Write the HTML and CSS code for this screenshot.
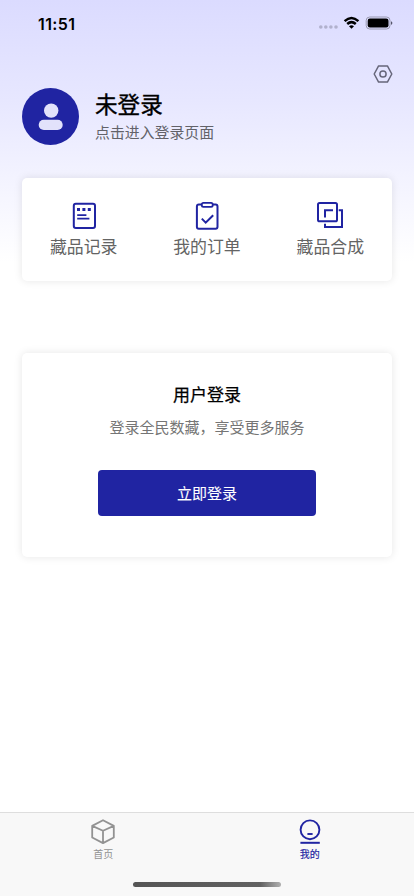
FILE: index.html
```html
<!DOCTYPE html>
<html lang="zh-CN">
<head>
<meta charset="utf-8">
<meta name="viewport" content="width=device-width, initial-scale=1">
<title>我的</title>
<link rel="stylesheet" href="styles.css">
</head>
<body>
<div class="app">
  <header class="status">
    <span class="time">11:51</span>
    <svg class="indicators" width="75" height="16" viewBox="0 0 75 16">
      <g fill="#b1b1cd"><circle cx="2.8" cy="12" r="1.8"/><circle cx="7.8" cy="12" r="1.8"/><circle cx="12.9" cy="12" r="1.8"/><circle cx="18" cy="12" r="1.8"/></g>
      <g fill="none" stroke="#000" stroke-width="2.5"><path d="M26.6 6.1Q33.5-.2 40.4 6.1"/><path d="M29.2 9Q33.5 5.2 37.8 9"/></g>
      <path d="M31 11.3Q33.5 9.2 36 11.3L33.5 13.8Z"/>
      <rect x="48.2" y="2" width="23.8" height="12" rx="3.5" fill="none" stroke="#9999b0"/>
      <rect x="49.7" y="3.5" width="20.8" height="9" rx="2.2"/>
      <path d="M73 6.2Q74.4 6.7 74.4 8T73 9.9Z" fill="#55556a"/>
    </svg>
  </header>
  <div class="settings">
    <svg width="20" height="20" viewBox="0 0 20 20" fill="none" stroke="#66667a" stroke-width="1.5" stroke-linejoin="round"><path d="M5.6 1.9H14.4L18.8 10L14.4 18.1H5.6L1.2 10Z"/><circle cx="10" cy="10" r="3.1"/></svg>
  </div>
  <section class="profile">
    <svg width="57" height="57" viewBox="0 0 57 57"><circle cx="28.5" cy="28.5" r="28.5" fill="#2024a2"/><g fill="#e2e2fb"><circle cx="29.2" cy="22.6" r="7.2"/><rect x="16.7" y="31.7" width="24" height="10.3" rx="5.1"/></g></svg>
    <div class="who"><h1>未登录</h1><p>点击进入登录页面</p></div>
  </section>
  <nav class="card menu">
    <a class="entry">
      <svg width="30" height="30" viewBox="0 0 30 30" fill="none" stroke="#2024a2" stroke-width="2"><rect x="4.8" y="3.7" width="21.2" height="24.3" rx="2"/><path d="M8.2 15.2H17.4M8.2 18.6H20.4" stroke-width="1.8"/><path d="M8 9.6H11M13.4 9.6H16.4M18.8 9.6H21.8" stroke-width="3"/></svg>
      <span>藏品记录</span>
    </a>
    <a class="entry">
      <svg width="30" height="30" viewBox="0 0 30 30" fill="none" stroke="#2024a2" stroke-width="2"><path d="M9.8 4.5H6.8Q4.9 4.5 4.9 6.4V26.8Q4.9 28.8 6.8 28.8H23.6Q25.5 28.8 25.5 26.8V6.4Q25.5 4.5 23.6 4.5H20.6"/><rect x="9.8" y="2.8" width="10.9" height="4" rx="1.6" stroke-width="1.8"/><path d="M9.8 18.6L13.7 22.6L21.2 15.2"/></svg>
      <span>我的订单</span>
    </a>
    <a class="entry">
      <svg width="30" height="30" viewBox="0 0 30 30" fill="none" stroke="#2024a2" stroke-width="2"><rect x="3" y="2.9" width="19" height="18.4" rx="1.6"/><path d="M10 17.5V10.2H18M23.7 10.2H27V27H10V23.7"/></svg>
      <span>藏品合成</span>
    </a>
  </nav>
  <section class="card login">
    <h2>用户登录</h2>
    <p>登录全民数藏，享受更多服务</p>
    <button>立即登录</button>
  </section>
  <footer class="tabs">
    <a class="tab">
      <svg width="28" height="28" viewBox="0 0 28 28" fill="none" stroke="#929292" stroke-width="1.8" stroke-linejoin="round"><path d="M14 2.2L24.8 7.9V19.5L14 25.1L3.2 19.5V7.9ZM3.2 7.9L14 12.8L24.8 7.9M14 12.8V25.1"/></svg>
      <span>首页</span>
    </a>
    <a class="tab active">
      <svg width="28" height="28" viewBox="0 0 28 28" fill="none" stroke="#2024a2" stroke-width="1.9"><circle cx="14" cy="11.8" r="9.4"/><path d="M11.4 16H16.6"/><path d="M4.4 24.8H23.8" stroke-width="2"/></svg>
      <span>我的</span>
    </a>
  </footer>
  <div class="home-bar"></div>
</div>
</body>
</html>
```
FILE: styles.css
```css
* { box-sizing: border-box; margin: 0; padding: 0; }
body { font-family: "Noto Sans CJK SC", "Noto Sans", sans-serif; background: #fff; }
svg { display: block; flex: none; }
.app {
  height: 896px;
  display: flex;
  flex-direction: column;
  overflow: hidden;
  background: linear-gradient(#dbdbff 0, #e7e7ff 100px, #f3f3ff 178px, #fff 262px);
}
.status {
  height: 47px;
  padding: 0 21px 0 38px;
  display: flex;
  align-items: center;
  justify-content: space-between;
}
.time { font: 600 16px/20px Inter, sans-serif; letter-spacing: .4px; color: #000; }
.indicators { margin-bottom: 2px; }
.settings { height: 41px; padding: 17px 21px 0 0; display: flex; justify-content: flex-end; }
.profile { height: 57px; padding-left: 22px; display: flex; gap: 16px; }
.who h1 { font-size: 22.6px; line-height: 32px; font-weight: 400; color: #000; -webkit-text-stroke: .35px #000; }
.who p { font-size: 14.9px; line-height: 22px; margin-top: 1px; color: #626269; }
.card {
  margin: 0 22px;
  background: #fff;
  border-radius: 5px;
  box-shadow: 0 0 9px rgba(0, 0, 0, .1);
}
.menu { height: 103px; margin-top: 33px; display: grid; grid-template-columns: repeat(3, 1fr); }
.entry { display: flex; flex-direction: column; align-items: center; padding-top: 22px; }
.entry span { font-size: 16.9px; line-height: 24px; margin-top: 4px; color: #646464; }
.login {
  height: 204px;
  margin-top: 72px;
  display: flex;
  flex-direction: column;
  align-items: center;
}
.login h2 { font-size: 17px; line-height: 24px; margin-top: 29px; font-weight: 400; color: #000; -webkit-text-stroke: .25px #000; }
.login p { font-size: 15px; line-height: 22px; margin-top: 10px; color: #757575; }
.login button {
  width: 218px;
  height: 46px;
  margin-top: 32px;
  border: 0;
  border-radius: 4px;
  background: #2024a2;
  color: #fff;
  font: 15px/22px "Noto Sans CJK SC", sans-serif;
  -webkit-text-stroke: .1px #fff;
}
.tabs {
  height: 70px;
  margin-top: auto;
  padding-right: 1px;
  display: grid;
  grid-template-columns: 1fr 1fr;
  background: #f8f8f8;
  border-top: 1px solid #dedede;
}
.tab { display: flex; flex-direction: column; align-items: center; padding-top: 5px; color: #929292; }
.tab span { font-size: 10px; line-height: 14px; margin-top: 1px; }
.tab.active { color: #2024a2; -webkit-text-stroke: .15px #2024a2; }
.home-bar { height: 14px; background: #f8f8f8; }
.home-bar::before {
  content: "";
  display: block;
  width: 148px;
  height: 5px;
  margin: 0 auto;
  border-radius: 3px;
  background: linear-gradient(90deg, #555 0, #626262 86%, #b0b0b0 100%);
}
```
